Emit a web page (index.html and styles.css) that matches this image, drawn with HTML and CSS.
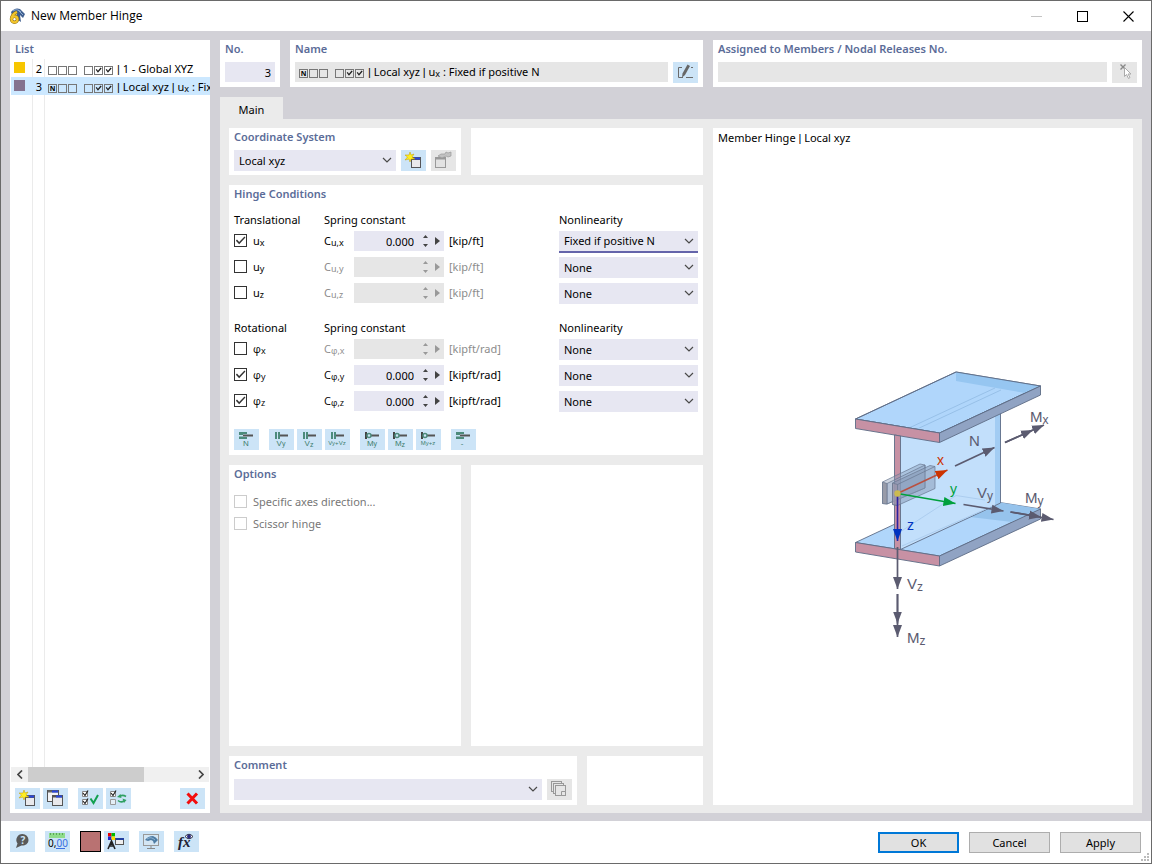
FILE: index.html
```html
<!DOCTYPE html>
<html lang="en">
<head>
<meta charset="utf-8">
<title>New Member Hinge</title>
<link rel="stylesheet" href="styles.css">
</head>
<body>
<svg class="defs" aria-hidden="true">
  <defs>
    <g id="i-new">
      <rect x="10" y="7" width="10" height="11" fill="#555558"/>
      <rect x="11" y="10" width="8" height="7" fill="#e9e9ec"/>
      <path d="M13 8.500h6" stroke="#2946e0" stroke-width="2"/>
      <path d="M9 2l1 3 3-1-2 3 3 2-4 0-1 3-1-3-4 1 2.500-3-2.500-2 4 0z" fill="#ffee20" stroke="#c09a00" stroke-width=".5"/>
    </g>
    <g id="i-chev"><path d="M1 1l4 4 4-4" fill="none" stroke="#4a4a4a" stroke-width="1.200"/></g>
    <g id="i-spin"><path d="M2.500 0l2.500 3H0zM2.500 12l2.500-3H0z" fill="currentColor"/></g>
    <g id="i-axial"><path d="M5 3h8v2H9v1H5zM5 10h8V8H9V7.500H5z" fill="#4d8b7c"/><path d="M9 6.500h10" stroke="#555" stroke-width="2"/></g>
    <g id="i-shear"><path d="M6 3h2v7H6zM9 3h2v7H9z" fill="#4d8b7c"/><path d="M11 6.500h8" stroke="#555" stroke-width="2"/></g>
    <g id="i-moment"><path d="M6 3v7" stroke="#444" stroke-width="2"/><path d="M7 6.500h12" stroke="#555" stroke-width="2"/><circle cx="9" cy="6.500" r="2" fill="#cce4f7" stroke="#4d8b7c" stroke-width="1.500"/></g>
    <marker id="head" markerUnits="userSpaceOnUse" markerWidth="13" markerHeight="10" refX="12" refY="5" orient="auto"><path d="M0 0.500L12 5L0 9.500z" fill="#5b5b70"/></marker>
    <marker id="head-x" markerUnits="userSpaceOnUse" markerWidth="13" markerHeight="10" refX="12" refY="5" orient="auto"><path d="M0 0.500L12 5L0 9.500z" fill="#cc3300"/></marker>
    <marker id="head-y" markerUnits="userSpaceOnUse" markerWidth="13" markerHeight="10" refX="12" refY="5" orient="auto"><path d="M0 0.500L12 5L0 9.500z" fill="#00a03c"/></marker>
    <marker id="head-z" markerUnits="userSpaceOnUse" markerWidth="13" markerHeight="10" refX="12" refY="5" orient="auto"><path d="M0 0.500L12 5L0 9.500z" fill="#0032c0"/></marker>
  </defs>
</svg>

<div class="window">
  <header class="titlebar">
    <svg class="app-icon" viewBox="0 0 16 16" aria-hidden="true">
      <path d="M2 4Q6-1 11 1L16 6 14 10 11 7 12 14 9 12 7 4 3 7z" fill="#3f5f90"/>
      <path d="M4 3Q8 0 12 4M9 2l5 5" stroke="#8fadd2" fill="none"/>
      <path d="M8 4Q3 6 2.500 11" fill="none" stroke="#8a6d16" stroke-width="3.400"/>
      <circle cx="5.500" cy="11.300" r="3" fill="#fff" stroke="#8a6d16" stroke-width="3.400"/>
      <path d="M8 4Q3 6 2.500 11" fill="none" stroke="#f3c52b" stroke-width="2.200"/>
      <circle cx="5.500" cy="11.300" r="3" fill="none" stroke="#f3c52b" stroke-width="2.200"/>
    </svg>
    <h1 class="title">New Member Hinge</h1>
    <div class="win-buttons">
      <button class="win-btn" aria-label="Minimize" disabled><svg width="11" height="11"><path d="M0 5.500h11" stroke="#c4c4c4"/></svg></button>
      <button class="win-btn" aria-label="Maximize"><svg width="11" height="11"><rect x=".5" y=".5" width="10" height="10" fill="none" stroke="#000"/></svg></button>
      <button class="win-btn" aria-label="Close"><svg width="11" height="11"><path d="M.5.5l10 10M10.500.5l-10 10" stroke="#000" stroke-width="1.100"/></svg></button>
    </div>
  </header>

  <main class="body">
    <section class="panel list-panel">
      <h2 class="heading">List</h2>
      <div class="list">
        <div class="item">
          <span class="swatch yellow"></span><span class="num">2</span>
          <span class="desc"><span class="boxes"><i></i><i></i><i></i></span><span class="boxes"><i></i><i class="on"></i><i class="on"></i></span><span class="bar">|</span> 1 - Global XYZ</span>
        </div>
        <div class="item selected">
          <span class="swatch purple"></span><span class="num">3</span>
          <span class="desc"><span class="boxes"><i>N</i><i></i><i></i></span><span class="boxes"><i></i><i class="on"></i><i class="on"></i></span><span class="bar">|</span> Local xyz <span class="bar">|</span> u<sub>x</sub> : Fixed if positive N</span>
        </div>
        <div class="rest"></div>
      </div>
      <div class="scrollbar">
        <button class="scroll-btn" aria-label="Scroll left"><svg width="6" height="9"><path d="M5 .5L1 4.500l4 4" fill="none" stroke="#444" stroke-width="1.700"/></svg></button>
        <div class="track"><div class="thumb"></div></div>
        <button class="scroll-btn" aria-label="Scroll right"><svg width="6" height="9"><path d="M1 .5l4 4-4 4" fill="none" stroke="#444" stroke-width="1.700"/></svg></button>
      </div>
      <div class="list-tools">
        <button class="tool" aria-label="New"><svg viewBox="0 0 25 21"><use href="#i-new"/></svg></button>
        <button class="tool" aria-label="Copy"><svg viewBox="0 0 25 21"><rect x="4.500" y="2.500" width="11" height="11" fill="#f4f4f6" stroke="#555"/><path d="M5 3.500h10" stroke="#666" stroke-width="2"/><path d="M9 3.500h6" stroke="#2946e0" stroke-width="2"/><rect x="9.500" y="7.500" width="10" height="10" fill="#e9e9ec" stroke="#555"/><path d="M9 8.500h11" stroke="#555" stroke-width="2"/><path d="M13 8.500h6" stroke="#2946e0" stroke-width="2"/></svg></button>
        <button class="tool gap-left" aria-label="Select all"><svg viewBox="0 0 25 21"><path d="M4.500 3.500h5v5h-5zM4.500 11.500h5v5h-5z" fill="#fff" stroke="#888"/><path d="M5 5l2 2.500 3-5M5 13l2 2.500 3-5" fill="none" stroke="#222" stroke-width="1.200"/><path d="M12.500 10.500l3 4.500 4.500-8" fill="none" stroke="#12a050" stroke-width="2"/></svg></button>
        <button class="tool" aria-label="Invert selection"><svg viewBox="0 0 25 21"><path d="M4.500 3.500h5v5h-5z" fill="#fff" stroke="#888"/><path d="M4.500 11.500h5v5h-5z" fill="#e4eef6" stroke="#999"/><path d="M5 5l2 2.500 3-5" fill="none" stroke="#222" stroke-width="1.200"/><path d="M20 8.500q-3-2-6-.5M12 12.500q3 2.500 6 .5" fill="none" stroke="#2fa062" stroke-width="1.600"/><path d="M11 9l3.500-3 1 4zM20.500 12l-4-1.500 1.500 4.500z" fill="#2fa062"/></svg></button>
        <button class="tool push" aria-label="Delete"><svg viewBox="0 0 25 21"><path d="M7.500 5.500l9.500 10M17 5.500l-9.500 10" stroke="#f30d0d" stroke-width="3"/></svg></button>
      </div>
    </section>

    <div class="right">
      <div class="top-row">
        <section class="panel">
          <h2 class="heading"><label for="no">No.</label></h2>
          <input class="field number" id="no" value="3">
        </section>
        <section class="panel">
          <h2 class="heading" id="name-label">Name</h2>
          <div class="line">
            <div class="field readonly name-field" role="textbox" aria-readonly="true" aria-labelledby="name-label"><span class="boxes"><i>N</i><i></i><i></i></span><span class="boxes"><i></i><i class="on"></i><i class="on"></i></span><span class="bar">|</span> Local xyz <span class="bar">|</span> u<sub>x</sub> : Fixed if positive N</div>
            <button class="tool" aria-label="Edit name"><svg viewBox="0 0 25 21"><path d="M9 5.500H5.500v10H10M13 15.500h7M18 5.500h2" fill="none" stroke="#6a6a6a"/><path d="M14.500 2.500l2.500 1.500-5 9-3 2.500.5-4z" fill="#666"/></svg></button>
          </div>
        </section>
        <section class="panel">
          <h2 class="heading"><label for="assigned">Assigned to Members / Nodal Releases No.</label></h2>
          <div class="line">
            <input class="field readonly" id="assigned" readonly>
            <button class="tool off" aria-label="Pick in model" disabled><svg viewBox="0 0 25 21"><path d="M8.500 2.500l5 5M13.500 2.500l-5 5" stroke="#888" stroke-width="1.400"/><path d="M12.500 5.500v9l2-2 2 4 1.500-1-2-3.500h3z" fill="#fff" stroke="#aaa"/></svg></button>
          </div>
        </section>
      </div>

      <div class="tabs" role="tablist"><button class="tab" role="tab" aria-selected="true">Main</button></div>

      <div class="content">
        <div class="form">
          <div class="pair">
            <section class="panel">
              <h2 class="heading"><label for="cs">Coordinate System</label></h2>
              <div class="line">
                <div class="select"><select id="cs"><option>Local xyz</option></select><svg viewBox="0 0 10 6"><use href="#i-chev"/></svg></div>
                <button class="tool" aria-label="New coordinate system"><svg viewBox="0 0 25 21"><use href="#i-new"/></svg></button>
                <button class="tool off" aria-label="Edit coordinate system" disabled><svg viewBox="0 0 25 21"><rect x="4.500" y="7.500" width="10" height="10" fill="#e2e2e2" stroke="#999"/><path d="M5 8.500h10" stroke="#999" stroke-width="2"/><path d="M7 6l3-2 4 0 1-2 2 1 3-1v4l-3 1-2-1-4 2-2-1z" fill="#c2c2c2" stroke="#999" stroke-width=".7"/></svg></button>
              </div>
            </section>
            <section class="panel"></section>
          </div>

          <section class="panel">
            <h2 class="heading">Hinge Conditions</h2>
            <div class="conditions">
              <div class="group">
                <div class="row head"><span class="span-1">Translational</span><span class="span-3">Spring constant</span><span>Nonlinearity</span></div>
                <div class="row">
                  <label class="check"><input type="checkbox" checked><span>u<sub>x</sub></span></label>
                  <label for="cux">C<sub>u,x</sub></label>
                  <div class="spin"><input id="cux" value="0.000"><button aria-label="Step"><svg width="5" height="12"><use href="#i-spin"/></svg></button><button aria-label="More"><svg width="5" height="8"><path d="M0 0l5 4-5 4z" fill="currentColor"/></svg></button></div>
                  <span class="unit">[kip/ft]</span>
                  <div class="select focus"><select aria-label="Nonlinearity ux"><option>Fixed if positive N</option></select><svg viewBox="0 0 10 6"><use href="#i-chev"/></svg></div>
                </div>
                <div class="row disabled">
                  <label class="check"><input type="checkbox"><span>u<sub>y</sub></span></label>
                  <label for="cuy">C<sub>u,y</sub></label>
                  <div class="spin"><input id="cuy" disabled><button disabled aria-label="Step"><svg width="5" height="12"><use href="#i-spin"/></svg></button><button disabled aria-label="More"><svg width="5" height="8"><path d="M0 0l5 4-5 4z" fill="currentColor"/></svg></button></div>
                  <span class="unit">[kip/ft]</span>
                  <div class="select"><select aria-label="Nonlinearity uy"><option>None</option></select><svg viewBox="0 0 10 6"><use href="#i-chev"/></svg></div>
                </div>
                <div class="row disabled">
                  <label class="check"><input type="checkbox"><span>u<sub>z</sub></span></label>
                  <label for="cuz">C<sub>u,z</sub></label>
                  <div class="spin"><input id="cuz" disabled><button disabled aria-label="Step"><svg width="5" height="12"><use href="#i-spin"/></svg></button><button disabled aria-label="More"><svg width="5" height="8"><path d="M0 0l5 4-5 4z" fill="currentColor"/></svg></button></div>
                  <span class="unit">[kip/ft]</span>
                  <div class="select"><select aria-label="Nonlinearity uz"><option>None</option></select><svg viewBox="0 0 10 6"><use href="#i-chev"/></svg></div>
                </div>
              </div>
              <div class="group">
                <div class="row head"><span class="span-1">Rotational</span><span class="span-3">Spring constant</span><span>Nonlinearity</span></div>
                <div class="row disabled">
                  <label class="check greek"><input type="checkbox"><span>φ<sub>x</sub></span></label>
                  <label class="greek" for="cpx">C<sub>φ,x</sub></label>
                  <div class="spin"><input id="cpx" disabled><button disabled aria-label="Step"><svg width="5" height="12"><use href="#i-spin"/></svg></button><button disabled aria-label="More"><svg width="5" height="8"><path d="M0 0l5 4-5 4z" fill="currentColor"/></svg></button></div>
                  <span class="unit">[kipft/rad]</span>
                  <div class="select"><select aria-label="Nonlinearity φx"><option>None</option></select><svg viewBox="0 0 10 6"><use href="#i-chev"/></svg></div>
                </div>
                <div class="row">
                  <label class="check greek"><input type="checkbox" checked><span>φ<sub>y</sub></span></label>
                  <label class="greek" for="cpy">C<sub>φ,y</sub></label>
                  <div class="spin"><input id="cpy" value="0.000"><button aria-label="Step"><svg width="5" height="12"><use href="#i-spin"/></svg></button><button aria-label="More"><svg width="5" height="8"><path d="M0 0l5 4-5 4z" fill="currentColor"/></svg></button></div>
                  <span class="unit">[kipft/rad]</span>
                  <div class="select"><select aria-label="Nonlinearity φy"><option>None</option></select><svg viewBox="0 0 10 6"><use href="#i-chev"/></svg></div>
                </div>
                <div class="row">
                  <label class="check greek"><input type="checkbox" checked><span>φ<sub>z</sub></span></label>
                  <label class="greek" for="cpz">C<sub>φ,z</sub></label>
                  <div class="spin"><input id="cpz" value="0.000"><button aria-label="Step"><svg width="5" height="12"><use href="#i-spin"/></svg></button><button aria-label="More"><svg width="5" height="8"><path d="M0 0l5 4-5 4z" fill="currentColor"/></svg></button></div>
                  <span class="unit">[kipft/rad]</span>
                  <div class="select"><select aria-label="Nonlinearity φz"><option>None</option></select><svg viewBox="0 0 10 6"><use href="#i-chev"/></svg></div>
                </div>
              </div>
              <div class="presets">
                <div class="preset-group">
                  <button class="tool"><svg viewBox="0 0 25 21"><use href="#i-axial"/><text class="glyph" x="12" y="17">N</text></svg></button>
                </div>
                <div class="preset-group">
                  <button class="tool"><svg viewBox="0 0 25 21"><use href="#i-shear"/><text class="glyph" x="12" y="17">V<tspan class="gsub">y</tspan></text></svg></button>
                  <button class="tool"><svg viewBox="0 0 25 21"><use href="#i-shear"/><text class="glyph" x="12" y="17">V<tspan class="gsub" dy="1">z</tspan></text></svg></button>
                  <button class="tool"><svg viewBox="0 0 25 21"><use href="#i-shear"/><text class="glyph small" x="12" y="16">Vy+Vz</text></svg></button>
                </div>
                <div class="preset-group">
                  <button class="tool"><svg viewBox="0 0 25 21"><use href="#i-moment"/><text class="glyph" x="12" y="17">M<tspan class="gsub">y</tspan></text></svg></button>
                  <button class="tool"><svg viewBox="0 0 25 21"><use href="#i-moment"/><text class="glyph" x="12" y="17">M<tspan class="gsub" dy="1">z</tspan></text></svg></button>
                  <button class="tool"><svg viewBox="0 0 25 21"><use href="#i-moment"/><text class="glyph small" x="12" y="16">My+z</text></svg></button>
                </div>
                <div class="preset-group">
                  <button class="tool"><svg viewBox="0 0 25 21"><use href="#i-axial"/><text class="glyph" x="11" y="17">-</text></svg></button>
                </div>
              </div>
            </div>
          </section>

          <div class="pair grow">
            <section class="panel">
              <h2 class="heading">Options</h2>
              <div class="options">
                <label class="check"><input type="checkbox" disabled><span>Specific axes direction...</span></label>
                <label class="check"><input type="checkbox" disabled><span>Scissor hinge</span></label>
              </div>
            </section>
            <section class="panel"></section>
          </div>

          <div class="comment-row">
            <section class="panel comment">
              <h2 class="heading"><label for="comment">Comment</label></h2>
              <div class="line">
                <div class="select"><select id="comment"><option></option></select><svg viewBox="0 0 10 6"><use href="#i-chev"/></svg></div>
                <button class="tool off" aria-label="Comment templates" disabled><svg viewBox="0 0 25 21"><g fill="#e6e6e6" stroke="#999"><rect x="4.500" y="2.500" width="10" height="10"/><rect x="6.500" y="4.500" width="10" height="10"/><rect x="8.500" y="6.500" width="10" height="10"/><path d="M14.500 16.500v-4h4"/></g></svg></button>
              </div>
            </section>
            <section class="panel"></section>
          </div>
        </div>

        <section class="panel preview">
          <h2 class="caption">Member Hinge <span class="bar">|</span> Local xyz</h2>
          <svg class="scene" viewBox="718 148 410 653" role="img" aria-label="Member hinge axes and forces">
            <g stroke="#5e6c86" stroke-width=".9" stroke-linejoin="round">
              <path d="M855.500 542.500L956 495.500L1040.500 509L939.500 556z" fill="#b0d6fb"/>
              <path d="M985 500L1000.500 502.500L1040.500 509L1012 522L970 517z" fill="#96c3ec" stroke="none"/>
              <path d="M900.500 436L1000.500 388V503L900.500 549.500z" fill="#c2dffb" stroke="none"/>
              <path d="M995 391h5.500v112l-5.500 2z" fill="#a2ccf3" stroke="none"/>
              <path d="M1000.500 393V503L900.500 549.500" fill="none"/>
              <path d="M900 532L956 495.500L985 500M902 546L995 505" fill="none" stroke="#a9cbed"/>
              <path d="M939.500 556L1040.500 509V519L939.500 566z" fill="#90a3c3"/>
              <path d="M855.500 542.500L939.500 556V566L855.500 552z" fill="#c791a4"/>
              <path d="M855.500 419L956 372L1040.500 386L939.500 433z" fill="#b0d6fb"/>
              <path d="M956 372L1040.500 386L1025 393L956 381z" fill="#96c6f1" stroke="none"/>
              <path d="M1001 390L915 430M995 388L909 428" fill="none" stroke="#94bde5"/>
              <path d="M855.500 419L956 372L1040.500 386L939.500 433z" fill="none"/>
              <path d="M939.500 433L1040.500 386V395L939.500 442.500z" fill="#90a3c3"/>
              <path d="M855.500 419L939.500 433V442.500L855.500 428.500z" fill="#c791a4"/>
              <path d="M894.500 435L900.500 436V549.500L894.500 548.500z" fill="#c791a4"/>
            </g>
            <g stroke="#68778f" stroke-width=".7" stroke-linejoin="round">
              <path d="M882.500 482L920 464L925 465V488L887 504L882.500 503.500z" fill="#8899b3" fill-opacity=".4"/>
              <path d="M887 483.500L925 465V488L887 504z" fill="#8ea6c5" fill-opacity=".4"/>
              <path d="M882.500 482L887 483.500V504L882.500 503.500z" fill="#989ba8"/>
              <path d="M892.500 483L930 465.500L935 466.500V488.500L897.500 505.500L892.500 504.500z" fill="#8597b4" fill-opacity=".5"/>
              <path d="M892.500 483L897.500 484.500V505.500L892.500 504.500z" fill="#9c94a9" fill-opacity=".7"/>
              <path d="M897.500 484.500L935 466.500" fill="none"/>
            </g>
            <path d="M897.500 493.500L947.500 470" stroke="#b95040" stroke-width="1.500" marker-end="url(#head-x)"/>
            <path d="M897.500 493.500L955.500 503.500" stroke="#00a03c" stroke-width="1.600" marker-end="url(#head-y)"/>
            <path d="M897.500 493.500V541" stroke="#3020a0" stroke-width="1.600" marker-end="url(#head-z)"/>
            <circle cx="897.500" cy="493.500" r="3.200" fill="#cbbb52"/>
            <g stroke="#5b5b70" stroke-width="1.700" fill="none" marker-end="url(#head)">
              <path d="M955 466L994.500 447.500"/>
              <path d="M1005 442.500L1033 430"/><path d="M1005 442.500L1044 425"/>
              <path d="M963.500 504.500L1003.500 511"/>
              <path d="M1010.500 512L1041 517"/><path d="M1010.500 512L1053.500 519.500"/>
              <path d="M897.500 547V589"/>
              <path d="M897.500 594V623.500"/><path d="M897.500 594V637"/>
            </g>
            <g class="axis">
              <text x="937" y="465" fill="#cc3300">x</text>
              <text x="950" y="494" fill="#00a03c">y</text>
              <text x="907" y="530" fill="#0032c0">z</text>
            </g>
            <g class="force">
              <text x="969" y="446">N</text>
              <text x="1030" y="422">M<tspan class="fsub" dy="2">x</tspan></text>
              <text x="977" y="498">V<tspan class="fsub" dy="2">y</tspan></text>
              <text x="1025" y="503">M<tspan class="fsub" dy="2">y</tspan></text>
              <text x="907" y="589">V<tspan class="fsub" dy="2">z</tspan></text>
              <text x="907" y="643">M<tspan class="fsub" dy="2">z</tspan></text>
            </g>
          </svg>
        </section>
      </div>
    </div>
  </main>

  <footer class="footer">
    <div class="footer-tools">
      <button class="tool" aria-label="Help"><svg viewBox="0 0 25 21"><path d="M12.500 3a6 6 0 0 1 6 6c0 4-4 6-7 5.500L6 17l1.500-4.500A6 6 0 0 1 12.500 3z" fill="#595959"/><text class="help" x="13" y="13">?</text></svg></button>
      <button class="tool" aria-label="Units"><svg viewBox="0 0 25 21"><rect x="4" y="2" width="16" height="5" fill="#8fdc8c"/><path d="M5.500 2v2M8.500 2v2M11.500 2v2M14.500 2v2M17.500 2v2" stroke="#5aa858"/><text class="units" x="3" y="16">0,<tspan fill="#3b6fe0">00</tspan></text><path d="M11 17.500h9" stroke="#3b6fe0"/></svg></button>
      <button class="color-btn" aria-label="Color"></button>
      <button class="tool" aria-label="Display properties"><svg viewBox="0 0 25 21"><path d="M4 2h3.500v3.500H4z" fill="#e00"/><path d="M7.500 2H11v3.500H7.500z" fill="#0b0"/><path d="M4 5.500h3.500V9H4z" fill="#22c"/><path d="M7.500 5.500H11V9H7.500z" fill="#fd0"/><path d="M4 18l3.500-8L11 18M5 15h5M7.500 10v4" fill="none" stroke="#222" stroke-width="1.600"/><rect x="11.500" y="7.500" width="8" height="6" fill="#eee" stroke="#555"/><path d="M12 8h8" stroke="#2340a0" stroke-width="2"/></svg></button>
      <button class="tool" aria-label="View"><svg viewBox="0 0 25 21"><rect x="4.500" y="3.500" width="15" height="11" fill="#d4e6f4" stroke="#999"/><path d="M6 9q3-4 8-4 3 1 5 4l-4 4-1-3-2-1-3 1z" fill="#4e7ca4"/><path d="M8 8q4-3 8 1" fill="none" stroke="#8fb4d4"/><path d="M12 15v2M8 17.500h8" stroke="#888"/></svg></button>
      <button class="tool" aria-label="Formula"><svg viewBox="0 0 25 21"><text class="fx" x="4" y="16">fx</text><path d="M11 5.500q4-4.500 8 0-4 4.500-8 0z" fill="#fff" stroke="#334"/><circle cx="15" cy="5.500" r="2" fill="#2a2a80"/></svg></button>
    </div>
    <div class="actions">
      <button class="action primary">OK</button>
      <button class="action">Cancel</button>
      <button class="action">Apply</button>
    </div>
    <svg class="grip" viewBox="0 0 8 8" aria-hidden="true"><path d="M6 0h2v2H6zM3 3h2v2H3zM6 3h2v2H6zM0 6h2v2H0zM3 6h2v2H3zM6 6h2v2H6z" fill="#bbb"/></svg>
  </footer>
</div>
</body>
</html>
```

FILE: styles.css
```css
* { box-sizing: border-box; }

body {
  margin: 0;
  font-family: "Noto Sans", "Open Sans", sans-serif;
  font-size: 11px;
  line-height: 18px;
  color: #000;
}

button, input, select { font: inherit; color: inherit; }
button { padding: 0; border: 0; background: none; }
h1, h2 { margin: 0; font-size: inherit; font-weight: normal; }
sub { font-size: 9px; line-height: 0; vertical-align: -1px; }
.defs { position: absolute; width: 0; height: 0; }
.bar { font-family: "Liberation Sans", sans-serif; line-height: 1; }
.greek { font-family: "Open Sans", sans-serif; }

.window {
  display: flex;
  flex-direction: column;
  min-height: 100vh;
  border: 1px solid #6a6a6a;
  background: #fff;
}

/* Title bar */
.titlebar { display: flex; align-items: center; height: 30px; padding-left: 8px; }
.app-icon { width: 16px; height: 16px; margin-right: 6px; }
.title { font-family: "Open Sans", sans-serif; font-size: 12px; flex: 1; }
.win-buttons { display: flex; }
.win-btn { width: 46px; height: 30px; display: grid; place-items: center; }

/* Main area */
.body {
  flex: 1;
  display: flex;
  gap: 10px;
  padding: 9px 9px 8px;
  background: #d2d1d7;
}
.panel { background: #fff; padding: 0 5px 4px; min-width: 0; }
.heading { height: 18px; margin-bottom: 4px; font-weight: 600; color: #5b6c98; white-space: nowrap; }

.list-panel { flex: none; width: 200px; display: flex; flex-direction: column; padding: 0; }
.list-panel .heading { padding-left: 5px; margin-bottom: 1px; }
.list { flex: 1; display: flex; flex-direction: column; margin-left: 1px; }
.item { display: grid; grid-template-columns: 22px 12px 1fr; height: 18px; line-height: 20px; }
.item.selected { background: #cce8ff; }
.rest { flex: 1; border-left: 1px solid #ebebeb; border-right: 1px solid #ebebeb; width: 13px; margin-left: 21px; }
.swatch { width: 11px; height: 11px; margin: 3px 0 0 3px; }
.yellow { background: #f7c600; }
.purple { background: #84728f; }
.num { text-align: right; padding-right: 3px; }
.item:not(.selected) .num { box-shadow: -1px 0 #ebebeb, inset -1px 0 #ebebeb; }
.desc { overflow: hidden; white-space: nowrap; padding-left: 3px; }
.boxes { display: inline-flex; gap: 1px; height: 9px; margin-right: 7px; vertical-align: middle; }
.boxes + .boxes { margin-right: 4px; }
.boxes i { display: block; width: 9px; height: 9px; border: 1px solid #777; font: bold 7px/7px "Noto Sans", sans-serif; text-align: center; }
.boxes .on::before { content: ""; display: block; height: 7px; background: #222; clip-path: polygon(10% 45%, 25% 35%, 42% 60%, 80% 15%, 95% 28%, 42% 88%); }

.scrollbar { display: flex; height: 15px; margin: 0 1px; background: #f0f0f0; }
.scroll-btn { width: 17px; display: grid; place-items: center; }
.track { flex: 1; }
.thumb { width: 71%; height: 100%; background: #cdcdcd; }
.list-tools { display: flex; gap: 3px; padding: 6px 5px 4px; }
.gap-left { margin-left: 7px; }
.push { margin-left: auto; }

.tool { flex: none; width: 25px; height: 21px; background: #cce4f7; }
.tool svg { display: block; width: 25px; height: 21px; }
.tool.off { background: #e6e6e6; }

/* Right side */
.right { flex: 1; min-width: 0; display: flex; flex-direction: column; }
.top-row { display: grid; grid-template-columns: 60px 413fr 429fr; gap: 10px; margin-bottom: 10px; }
.line { display: flex; gap: 5px; }
.field { display: block; width: 100%; min-width: 0; height: 20px; border: 0; padding: 0 4px; background: #e7e7f2; }
.number { text-align: right; }
.readonly { background: #e6e6e6; }
.name-field { flex: 1; line-height: 20px; white-space: nowrap; overflow: hidden; }

.tabs { display: flex; height: 22px; }
.tab { width: 63px; height: 26px; line-height: 26px; background: #ebebeb; }
.content { flex: 1; display: grid; grid-template-columns: 474fr 420fr; gap: 10px; padding: 9px 9px 8px; background: #ebebeb; }
.form { display: flex; flex-direction: column; gap: 10px; min-width: 0; }
.pair { display: grid; grid-template-columns: 1fr 1fr; gap: 10px; }
.grow { flex: 1; }
.comment-row { display: grid; grid-template-columns: 3fr 1fr; gap: 10px; }
.comment { padding-bottom: 5px; }
.comment .heading { margin-bottom: 5px; }

.select { position: relative; flex: 1; height: 21px; min-width: 0; }
.select select { appearance: none; display: block; width: 100%; height: 21px; padding: 0 20px 0 5px; border: 0; border-radius: 0; background: #e7e7f2; }
.select svg { position: absolute; right: 4px; top: 7px; width: 10px; height: 6px; pointer-events: none; }
.select.focus select { height: 22px; border-bottom: 2px solid #6464aa; }

.conditions { display: flex; flex-direction: column; gap: 14px; padding: 3px 0 1px; }
.group { display: flex; flex-direction: column; gap: 5px; }
.row { display: grid; grid-template-columns: 90px 30px 90px 1fr 139px; height: 21px; line-height: 20px; white-space: nowrap; }
.head { margin-bottom: -5px; }
.span-3 { grid-column: span 3; }
.unit { padding-left: 5px; }
.disabled > label:not(.check), .disabled .unit { color: #8c8c8c; }

.check { display: flex; gap: 6px; line-height: 20px; }
.check input { appearance: none; width: 13px; height: 13px; margin: 3px 0 0; border: 1px solid #333; background: #fff; }
.check input:checked::before { content: ""; display: block; height: 11px; background: #333; clip-path: polygon(8% 52%, 18% 42%, 38% 64%, 86% 14%, 95% 23%, 38% 84%); }
.check input:disabled { border-color: #ccc; }

.spin { display: flex; align-items: center; height: 20px; background: #e7e7f2; color: #444; }
.spin input { flex: 1; min-width: 0; width: 0; height: 20px; padding: 1px 0 0; border: 0; background: none; text-align: right; color: #000; margin-right: 7px; }
.spin button { width: 9px; display: grid; place-items: center; margin-right: 3px; }
.spin button:last-child { margin-right: 2px; }
.disabled .spin { background: #e6e6e6; color: #999; }

.presets { display: flex; gap: 10px; padding-top: 3px; }
.preset-group { display: flex; gap: 3px; }
.glyph { font: 8px "Liberation Sans", sans-serif; fill: #3d7d6e; text-anchor: middle; }
.gsub { font-size: 7px; }
.small { font-size: 6px; }

.options { display: flex; flex-direction: column; gap: 2px; padding-top: 5px; color: #777; }

/* Preview */
.preview { display: flex; flex-direction: column; }
.caption { height: 20px; line-height: 20px; }
.scene { flex: 1; width: 100%; min-height: 0; display: block; }
.axis { font: 14px "Liberation Sans", sans-serif; }
.force { font: 15px "Liberation Sans", sans-serif; fill: #5b5b70; }
.fsub { font-size: 12px; }

/* Footer */
.footer { position: relative; display: flex; justify-content: space-between; padding: 10px 10px 10px 9px; height: 42px; }
.footer-tools { display: flex; gap: 10px; }
.color-btn { width: 21px; height: 21px; border: 1px solid #000; background: #b97272; margin-right: -7px; }
.help { font: bold 10px "Noto Sans", sans-serif; fill: #cce4f7; text-anchor: middle; }
.units { font: 10px "Noto Sans", sans-serif; }
.fx { font: italic bold 15px "Liberation Serif", serif; fill: #223; }
.actions { display: flex; gap: 10px; padding-top: 1px; }
.action { width: 81px; height: 21px; border: 1px solid #adadad; background: #e1e1e1; }
.primary { border: 2px solid #0078d7; }
.grip { position: absolute; right: 2px; bottom: 2px; width: 8px; height: 8px; }
```
